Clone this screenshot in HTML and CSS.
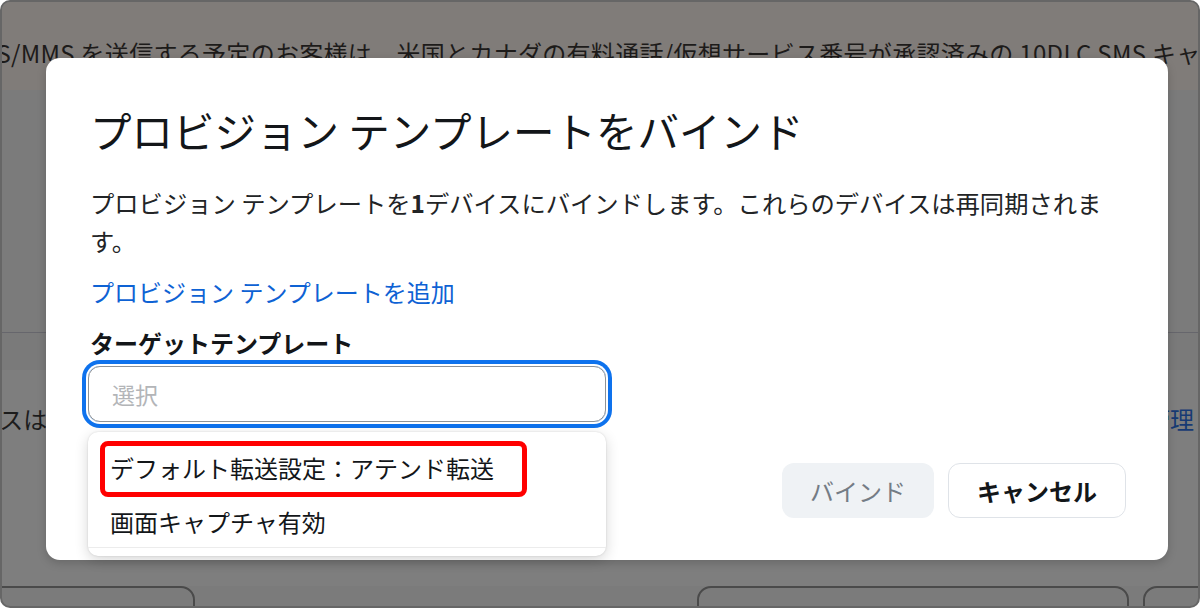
FILE: index.html
```html
<!doctype html>

<html lang="ja">
<head>
  <meta charset="utf-8">
  <title>プロビジョン テンプレートをバインド</title>
  <meta name="viewport" content="width=device-width, initial-scale=1.0">

  <link rel="stylesheet" href="styles.css">
</head>
<body>

  <div class="frame">

    <!-- page behind the dialog -->
    <div class="page">
      <div class="banner">
        <p class="banner-text">SMS/MMS を送信する予定のお客様は、米国とカナダの有料通話/仮想サービス番号が承認済みの 10DLC SMS キャンペーンに登録されていることを確認してください。</p>
      </div>
      <div class="section"></div>
      <div class="band"></div>
      <div class="row">
        <span class="row-text">のデバイスは</span>
        <a class="row-link">管理</a>
      </div>
      <div class="bottom">
        <div class="ghost ghost-left">キャンセル</div>
        <div class="ghost ghost-mid">デバイスを追加</div>
        <div class="ghost ghost-right">追加</div>
      </div>
    </div>

    <!-- dialog -->
    <div class="modal">
      <h1 class="modal-title">プロビジョン テンプレートをバインド</h1>
      <p class="modal-text">プロビジョン テンプレートを<b>1</b>デバイスにバインドします。これらのデバイスは再同期されます。</p>
      <a class="add-link">プロビジョン テンプレートを追加</a>
      <div class="field-label">ターゲットテンプレート</div>

      <div class="select-wrap">
        <div class="select">選択</div>
        <div class="menu">
          <div class="menu-list">
            <div class="menu-item">デフォルト転送設定：アテンド転送</div>
            <div class="menu-item menu-item-last">画面キャプチャ有効</div>
          </div>
          <div class="highlight"></div>
        </div>
      </div>

      <div class="actions">
        <button class="btn btn-bind" disabled>バインド</button>
        <button class="btn btn-cancel">キャンセル</button>
      </div>
    </div>

  </div>

</body>
</html>
```

FILE: styles.css
```css
/* base */

html, body {
  margin: 0;
  padding: 0;
  background: #ffffff;
}

body {
  font-family: "Noto Sans CJK JP", "Noto Sans", sans-serif;
  color: #131619;
}

.frame {
  position: relative;
  width: 1200px;
  height: 608px;
  box-sizing: border-box;
  border: 2px solid #666666;
  border-radius: 10px;
  overflow: hidden;
  background: #7b7b7b;
}

/* page behind the dialog (already dimmed) */

.page {
  display: flex;
  flex-direction: column;
  height: 100%;
}

.page > div {
  flex-shrink: 0;
}

.banner {
  height: 88px;
  background: #807c79;
  overflow: hidden;
}

.banner-text {
  margin: 36px 0 0 -40px;
  font-size: 24px;
  line-height: 30px;
  letter-spacing: 0.3px;
  white-space: nowrap;
  color: #1d1b1a;
}

.section {
  height: 242px;
  border-bottom: 1px solid #66666c;
}

.band {
  height: 37px;
  background: #7a7a7a;
}

.row {
  height: 216px;
  display: flex;
  justify-content: space-between;
  align-items: flex-start;
  background: #7e7e7e;
}

.row-text {
  margin: 32px 0 0 -98px;
  font-size: 24px;
  line-height: 34px;
  color: #1c1c1c;
}

.row-link {
  margin: 32px 4px 0 0;
  font-size: 24px;
  line-height: 34px;
  color: #173a74;
}

.bottom {
  display: flex;
}

.ghost {
  flex-shrink: 0;
  height: 60px;
  box-sizing: border-box;
  border: 2px solid #4a4a4a;
  border-radius: 14px;
  padding-top: 14px;
  text-align: center;
  font-size: 22px;
  color: #2a2a2a;
}

.ghost-left {
  width: 215px;
  margin-left: -22px;
}

.ghost-mid {
  width: 432px;
  margin-left: 502px;
}

.ghost-right {
  width: 120px;
  margin-left: 14px;
}

/* dialog */

.modal {
  position: absolute;
  left: 44px;
  top: 56px;
  width: 1122px;
  height: 502px;
  box-sizing: border-box;
  padding: 46px 42px 0 44px;
  background: #ffffff;
  border-radius: 14px;
  box-shadow: 0 3px 10px rgba(0, 0, 0, 0.18);
}

.modal-title {
  margin: 0;
  font-size: 41.5px;
  line-height: 52px;
  font-weight: 400;
  color: #131619;
}

.modal-text {
  margin: 28px 0 0;
  padding-right: 14px;
  font-size: 24.3px;
  line-height: 38px;
  color: #222426;
}

.add-link {
  display: block;
  margin-top: 13px;
  font-size: 24px;
  line-height: 38px;
  color: #0e62d4;
  text-decoration: none;
}

.field-label {
  margin-top: 15px;
  font-size: 24px;
  line-height: 34px;
  font-weight: 700;
  color: #131619;
}

.select-wrap {
  position: relative;
  width: 518px;
  margin: 6px 0 0 -2px;
}

.select {
  height: 56px;
  box-sizing: border-box;
  display: flex;
  align-items: center;
  padding-left: 23px;
  border: 1.5px solid #8e9296;
  border-radius: 12px;
  box-shadow: 0 0 0 2px #ffffff, 0 0 0 6px #0e72ed;
  font-size: 23px;
  color: #b3b5b8;
}

.menu {
  position: absolute;
  top: 66px;
  left: 0;
  width: 518px;
  height: 124px;
  box-sizing: border-box;
  padding-top: 8px;
  background: #ffffff;
  border-radius: 10px;
  box-shadow: 0 4px 14px rgba(0, 0, 0, 0.16), 0 0 2px rgba(0, 0, 0, 0.14);
  z-index: 2;
}

.menu-list {
  border-bottom: 1px solid #ececec;
}

.menu-item {
  height: 55px;
  display: flex;
  align-items: center;
  padding-left: 22px;
  font-size: 24px;
  color: #131619;
}

.menu-item-last {
  height: 52px;
}

.highlight {
  position: absolute;
  left: 12px;
  top: 9px;
  width: 427px;
  height: 56px;
  box-sizing: border-box;
  border: 5px solid #ff0000;
  border-radius: 8px;
}

.actions {
  display: flex;
  justify-content: flex-end;
  gap: 14px;
  margin-top: 41px;
}

.btn {
  height: 55px;
  padding: 0 28px;
  border-radius: 12px;
  font-family: inherit;
  font-size: 24px;
}

.btn-bind {
  border: none;
  background: #eff2f5;
  color: #747c85;
}

.btn-cancel {
  border: 1.5px solid #dfe3e8;
  background: #ffffff;
  color: #131619;
  font-weight: 700;
}
```
